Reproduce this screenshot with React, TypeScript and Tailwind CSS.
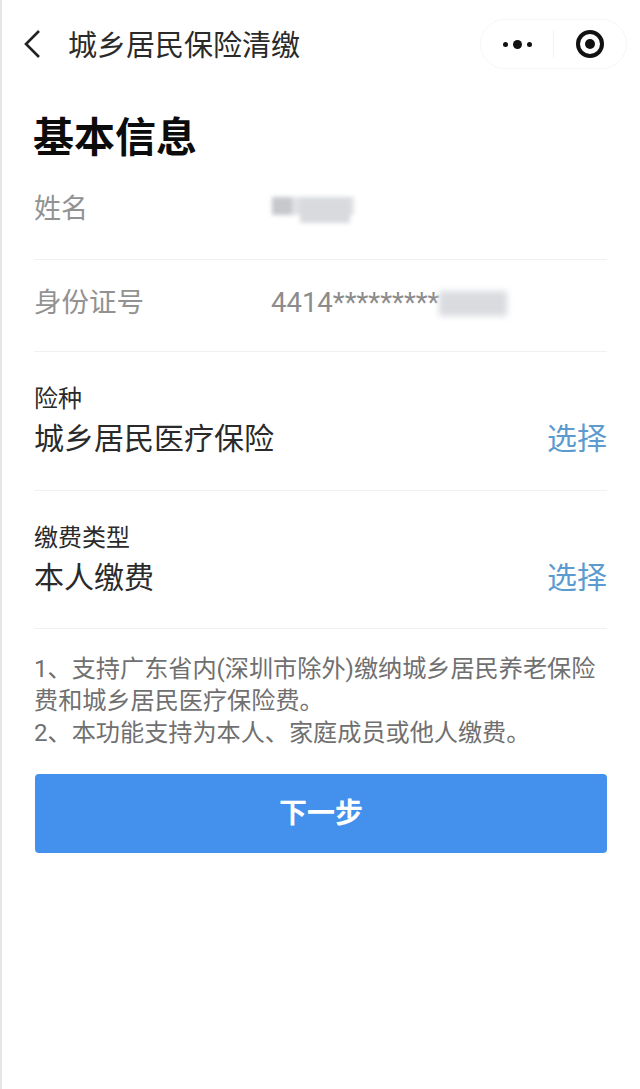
const font = "font-['Roboto','Noto_Sans_CJK_SC',sans-serif]";

function SelectRow({ label, value, h }: { label: string; value: string; h: string }) {
  return (
    <div className={`${h} border-b border-[#f0f1f2] pt-[30px]`}>
      <div className="text-[24px] leading-[34px] text-[#2b2b2b]">{label}</div>
      <div className="flex justify-between items-center h-[44px]">
        <span className="text-[30px] text-[#2a2a2a]">{value}</span>
        <span className="text-[30px] text-[#5b9bd0]">选择</span>
      </div>
    </div>
  );
}

export default function App() {
  return (
    <div className={`${font} w-[640px] h-[1089px] bg-white border-l-2 border-[#e6e6e8] overflow-hidden`}>
      {/* Nav */}
      <div className="h-[90px] flex items-center pl-[20px] pr-[13px]">
        <svg width="20" height="30" viewBox="0 0 20 30" fill="none" stroke="#222" strokeWidth="2.6" className="-mt-[2px]">
          <path d="M17 2 L4 15 L17 28" />
        </svg>
        <span className="ml-[26px] text-[29px] leading-none text-[#2a2a2a] mt-[3px]">城乡居民保险清缴</span>
        <div className="ml-auto w-[147px] h-[50px] -mt-[2px] rounded-full border border-[#f6f6f7] flex items-center">
          <div className="w-[72px] flex items-center justify-center gap-[5px]">
            <i className="w-[5px] h-[5px] rounded-full bg-[#111]" />
            <i className="w-[9px] h-[9px] rounded-full bg-[#111]" />
            <i className="w-[5px] h-[5px] rounded-full bg-[#111]" />
          </div>
          <div className="w-px h-[28px] bg-[#f3f3f3]" />
          <div className="flex-1 flex justify-center">
            <div className="w-[28px] h-[28px] rounded-full border-[4px] border-[#111] flex items-center justify-center">
              <i className="w-[10px] h-[10px] rounded-full bg-[#111]" />
            </div>
          </div>
        </div>
      </div>

      <div className="pl-[32px] pr-[33px]">
        <h1 className="text-[41px] leading-[48px] font-bold text-[#0c0c0c] mt-[24px] -ml-px">基本信息</h1>

        <div className="h-[98px] border-b border-[#f0f1f2] flex items-center pb-[3px]">
          <span className="w-[236px] text-[27px] text-[#929292] shrink-0">姓名</span>
          {/* masked name */}
          <span className="flex items-start gap-[8px] w-[82px] h-[18px] -mt-[6px] ml-[2px] blur-[2px] bg-[#dfe1e4]">
            <i className="w-[20px] h-[18px] bg-[#c6c8cc]" />
            <i className="w-[50px] h-[26px] bg-[#d8dade]" />
          </span>
        </div>
        <div className="h-[92px] border-b border-[#f0f1f2] flex items-center pb-[6px]">
          <span className="w-[236px] text-[27.5px] text-[#929292] shrink-0">身份证号</span>
          <span className="text-[27.5px] text-[#8c8c8c] leading-none ml-px">4414*********</span>
          <span className="w-[68px] h-[25px] mt-[1px] blur-[3px] bg-[#d9dbdf]" />
        </div>

        <SelectRow label="险种" value="城乡居民医疗保险" h="h-[139px]" />
        <SelectRow label="缴费类型" value="本人缴费" h="h-[138px]" />

        <div className="mt-[24px] text-[24.15px] leading-[32px] text-[#707070]">
          <p>1、支持广东省内(深圳市除外)缴纳城乡居民养老保险费和城乡居民医疗保险费。</p>
          <p>2、本功能支持为本人、家庭成员或他人缴费。</p>
        </div>

        <button className="mt-[25px] ml-px w-[572px] h-[79px] rounded-[4px] bg-[#4391ec] text-white text-[28px] font-bold flex items-center justify-center">
          下一步
        </button>
      </div>
    </div>
  );
}
